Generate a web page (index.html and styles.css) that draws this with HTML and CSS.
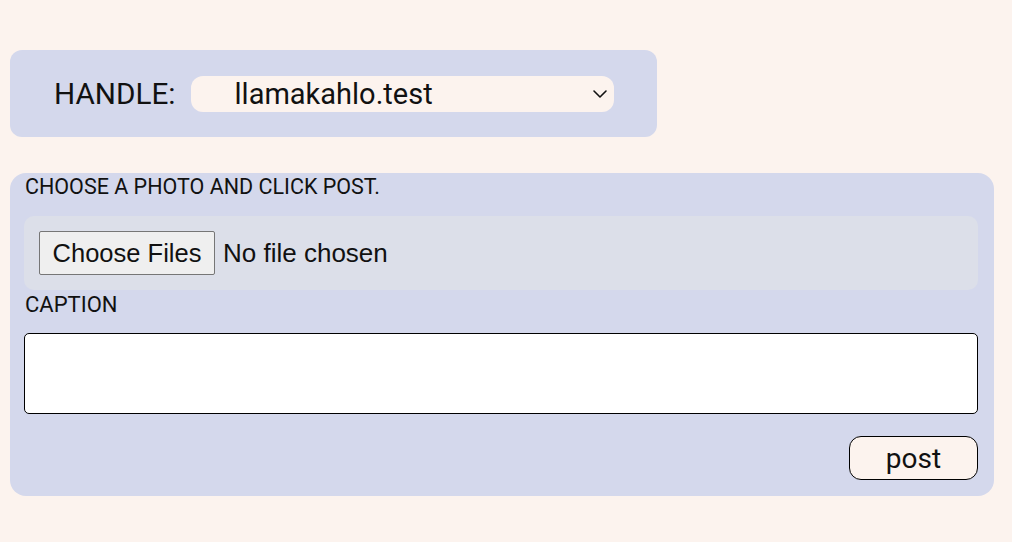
FILE: index.html
```html
<!DOCTYPE html>
<html>
<head>
<meta charset="utf-8">
<link rel="stylesheet" href="styles.css">
</head>
<body>
<div class="page">
  <div class="handle-panel">
    <label class="handle-label" for="handle">HANDLE:</label>
    <div class="select-wrap">
      <select id="handle" class="handle-select">
        <option>llamakahlo.test</option>
      </select>
      <svg class="chevron" width="16" height="10" viewBox="0 0 16 10"><path d="M2 2 L8 8 L14 2" fill="none" stroke="#111" stroke-width="1.6" stroke-linecap="round" stroke-linejoin="round"/></svg>
    </div>
  </div>

  <form class="post-panel">
    <div class="instructions">CHOOSE A PHOTO AND CLICK POST.</div>
    <div class="file-box">
      <input class="file-input" type="file" multiple>
    </div>
    <label class="caption-label" for="caption">CAPTION</label>
    <textarea id="caption" class="caption"></textarea>
    <div class="actions">
      <button type="button" class="post-btn">post</button>
    </div>
  </form>
</div>
</body>
</html>
```

FILE: styles.css
```css
html, body {
  margin: 0;
  padding: 0;
  background: #fcf3ee;
}
body {
  font-family: Roboto, "Liberation Sans", sans-serif;
  color: #111;
}
.page {
  padding: 50px 0 0 10px;
  display: flex;
  flex-direction: column;
  align-items: flex-start;
}
.handle-panel {
  width: 647px;
  height: 87px;
  box-sizing: border-box;
  background: #d4d8ec;
  border-radius: 12px;
  display: flex;
  align-items: center;
  padding-left: 44px;
  gap: 15px;
}
.handle-label {
  font-size: 29.7px;
  line-height: 34px;
  color: #111;
}
.select-wrap {
  position: relative;
  width: 423px;
  height: 36px;
}
.handle-select {
  appearance: none;
  -webkit-appearance: none;
  width: 100%;
  height: 36px;
  border: none;
  border-radius: 12px;
  background: #fcf3ee;
  padding: 0 0 0 44px;
  font-family: Roboto, sans-serif;
  font-size: 29px;
  color: #111;
  outline: none;
}
.chevron {
  position: absolute;
  right: 6px;
  top: 13px;
  pointer-events: none;
}
.post-panel {
  margin: 36px 0 0 0;
  width: 984px;
  box-sizing: border-box;
  background: #d4d8ec;
  border-radius: 16px;
  padding: 2px 16px 16px 14px;
  display: flex;
  flex-direction: column;
}
.instructions {
  font-size: 21.5px;
  line-height: 24px;
  margin-left: 1px;
}
.file-box {
  margin-top: 17px;
  background: #dcdfe9;
  border-radius: 10px;
  padding: 15px;
}
.file-input {
  font-family: "Liberation Sans", Arial, sans-serif;
  font-size: 26px;
  color: #111;
  display: block;
}
.file-input::file-selector-button {
  font-family: "Liberation Sans", Arial, sans-serif;
  font-size: 25.5px;
  height: 44px;
  width: 176px;
  padding: 0;
  margin-right: 8px;
  background: #efefef;
  border: 1px solid #767676;
  border-radius: 2px;
  color: #111;
}
.caption-label {
  margin: 2px 0 0 1px;
  font-size: 22px;
  line-height: 26px;
}
.caption {
  margin-top: 15px;
  height: 81px;
  box-sizing: border-box;
  border: 1px solid #000;
  border-radius: 5px;
  background: #fff;
  resize: none;
  font-family: Roboto, sans-serif;
}
.actions {
  display: flex;
  justify-content: flex-end;
  margin-top: 22px;
}
.post-btn {
  width: 129px;
  height: 44px;
  background: #fcf3ee;
  border: 1px solid #000;
  border-radius: 12px;
  font-family: Roboto, sans-serif;
  font-size: 28px;
  color: #111;
  padding: 0;
}
```
